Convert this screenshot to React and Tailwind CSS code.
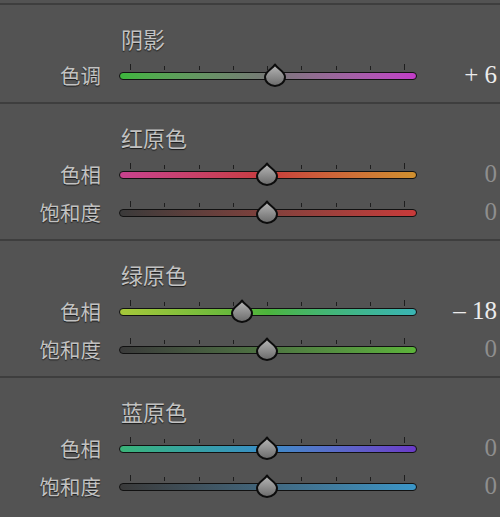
import React from "react";

const CJK = { fontFamily: '"Noto Sans CJK SC", "Noto Sans", sans-serif' };
const SERIF = { fontFamily: '"Liberation Serif", "DejaVu Serif", serif' };

/* ================= DATA ================= */

const SECTIONS = [
  {
    title: "阴影",
    rows: [
      {
        label: "色调",
        value: 6,
        track: "bg-linear-to-r from-[#3cb63c] via-[#767876] to-[#c23cc8]",
      },
    ],
  },
  {
    title: "红原色",
    rows: [
      {
        label: "色相",
        value: 0,
        track: "bg-linear-to-r from-[#c8428e] via-[#c83c3c] to-[#d0902e]",
      },
      {
        label: "饱和度",
        value: 0,
        track: "bg-linear-to-r from-[#3a3a3a] to-[#c83a3a]",
      },
    ],
  },
  {
    title: "绿原色",
    rows: [
      {
        label: "色相",
        value: -18,
        track: "bg-linear-to-r from-[#a6c83a] via-[#4cb43c] to-[#3ab4b4]",
      },
      {
        label: "饱和度",
        value: 0,
        track: "bg-linear-to-r from-[#3a3a3a] to-[#5cb43a]",
      },
    ],
  },
  {
    title: "蓝原色",
    rows: [
      {
        label: "色相",
        value: 0,
        track: "bg-linear-to-r from-[#3ab478] via-[#3a8cc8] to-[#6a3ac8]",
      },
      {
        label: "饱和度",
        value: 0,
        track: "bg-linear-to-r from-[#3a3a3a] to-[#3a96c8]",
      },
    ],
  },
];

// centre tick sits 148px into the slider; 100 units = 137px
const CENTER = 148;

const formatValue = (v) => {
  if (v > 0) return `+ ${v}`;
  if (v < 0) return `– ${Math.abs(v)}`;
  return "0";
};

/* ================= UI ================= */

const Thumb = ({ value }) => (
  <svg
    width="26"
    height="24"
    viewBox="0 0 26 24"
    className="absolute top-[7px]"
    style={{ left: CENTER + value * 1.37 - 13 }}
  >
    <defs>
      <linearGradient id="thumbFill" x1="0" y1="0" x2="0" y2="1">
        <stop offset="0" stopColor="#b8b8b8" />
        <stop offset="1" stopColor="#6a6a6a" />
      </linearGradient>
    </defs>
    <path
      d="M13 1.5 C14.8 5.5 23 8.5 23 14 A10 9 0 0 1 3 14 C3 8.5 11.2 5.5 13 1.5 Z"
      fill="url(#thumbFill)"
      stroke="#0c0c0c"
      strokeWidth="2"
      strokeLinejoin="round"
    />
  </svg>
);

const Slider = ({ value, track }) => (
  <div className="relative ml-[18px] flex h-[38px] w-[298px] shrink-0 flex-col">
    <div className="mt-[8px] flex h-[6px] items-end justify-between pl-[11px] pr-[12px]">
      {Array.from({ length: 9 }).map((_, i) => (
        <span
          key={i}
          className={`w-px bg-[#1e1e1e] ${i === 0 || i === 8 ? "h-[6px]" : "h-[4px]"}`}
        />
      ))}
    </div>
    <div
      className={`mt-[2px] h-[8px] rounded-full border-[1.5px] border-[#111] ${track}`}
    />
    <Thumb value={value} />
  </div>
);

const Row = ({ label, value, track }) => (
  <div className="flex h-[38px] items-center">
    <span
      className="w-[101px] shrink-0 text-right text-[20.5px] text-[#c2c2c2] [text-shadow:0_1px_1px_rgba(0,0,0,0.7)]"
      style={CJK}
    >
      {label}
    </span>
    <Slider value={value} track={track} />
    <span
      className={`flex-1 pr-[3px] text-right text-[25px] ${
        value === 0 ? "text-[#8e8e8e]" : "text-[#ececec]"
      }`}
      style={SERIF}
    >
      {formatValue(value)}
    </span>
  </div>
);

const Section = ({ title, rows }) => (
  <div className="border-t-2 border-[#3e3e3e] pb-[8px]">
    <div
      className="ml-[121px] mt-[19px] mb-[4px] h-[28px] text-[22px] leading-[28px] text-[#c2c2c2] [text-shadow:0_1px_1px_rgba(0,0,0,0.7)]"
      style={CJK}
    >
      {title}
    </div>
    {rows.map((r) => (
      <Row key={r.label} {...r} />
    ))}
  </div>
);

export default function App() {
  return (
    <div className="h-[517px] w-[500px] overflow-hidden bg-[#535353] pt-[3px]">
      {SECTIONS.map((s) => (
        <Section key={s.title} title={s.title} rows={s.rows} />
      ))}
    </div>
  );
}
